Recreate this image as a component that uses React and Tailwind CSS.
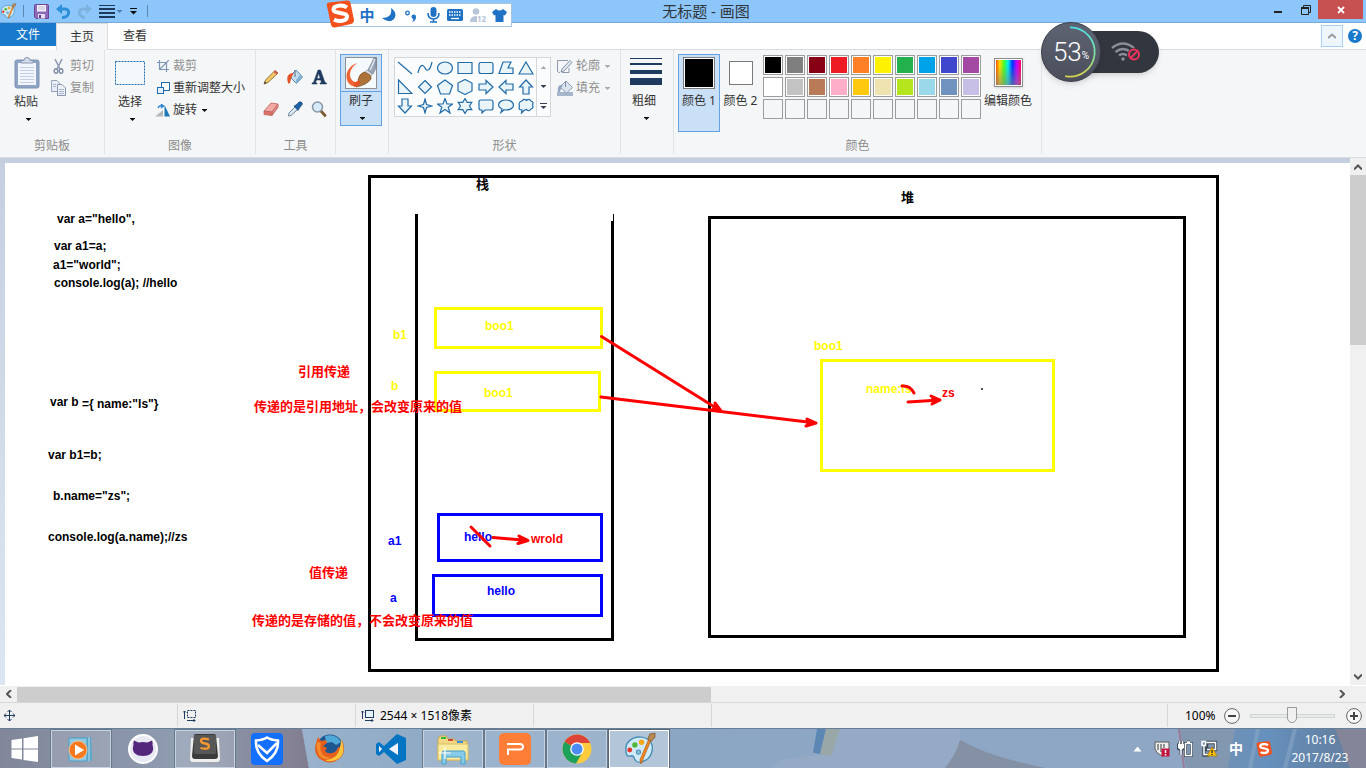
import React from "react";

const INK = "#1e3a5f";

function Icon({ w = 16, h = 16, box, className = "", children }) {
  return (
    <svg width={w} height={h} viewBox={box || `0 0 ${w} ${h}`} className={`shrink-0 ${className}`} aria-hidden="true">
      {children}
    </svg>
  );
}

function Caret({ color = "#111" }) {
  return (
    <Icon w={5} h={3}>
      <path d="M0 0H5V.5L2.500 3L0 .5Z" fill={color} />
    </Icon>
  );
}

function Palette({ size = 16 }) {
  return (
    <Icon w={size} h={size} box="0 0 32 32">
      <path
        d="M3 20C1 10 9 4 18 5c8 1 12 7 10 14-2 8-9 11-14 10-4-1-2-5-5-6-3 0-5 2-6-3Z"
        fill="#cfeaf8"
        stroke="#4a8fb8"
        strokeWidth="1.4"
      />
      <circle cx="6.500" cy="17.500" r="2.400" fill="#e5392f" />
      <circle cx="11.500" cy="12.500" r="2.600" fill="#52b83a" />
      <circle cx="18" cy="10" r="2.700" fill="#f6a91c" />
      <circle cx="15" cy="19.500" r="2" fill="#8fc0de" stroke="#4a8fb8" />
      <path d="M27 8L17.500 31L16.500 27L25 7Z" fill="#f08a24" stroke="#b8651a" strokeWidth=".8" />
      <path d="M24 7L26 2L31 1L31 5L27.500 9Z" fill="#b98a52" stroke="#7d5a33" strokeWidth=".8" />
    </Icon>
  );
}

function SogouMark({ size = 28 }) {
  return (
    <Icon w={size} h={size} box="0 0 28 28">
      <path d="M1 6Q0 3 3 2.500L21 .5Q24 0 24.500 3L28 20Q28 23 25 24L9 27.500Q6 28 5 25Z" fill="#f2501c" />
      <path
        d="M21 7.500C17 4.500 7.500 5 7.500 9.500C7.500 14 21 12 21 16.500C21 21.500 12 22 8 19.500"
        fill="none"
        stroke="#fff"
        strokeWidth="4"
      />
    </Icon>
  );
}

function TitleBar() {
  return (
    <header className="flex h-[23px] items-center border-b border-[#76aadb] bg-[#8cc6fa]">
      <div className="flex w-[150px] shrink-0 items-center">
        <Palette size={16} />
        <span className="ml-[7px] h-3 w-px bg-[#5b87ad]" />
        <button aria-label="保存" className="ml-[10px]">
          <Icon w={15} h={15}>
            <path d="M.5 1.500Q.5.5 1.500.5H13.500Q14.500.5 14.500 1.500V14.500H2L.5 13Z" fill="#8d69b8" stroke="#6b4796" />
            <rect x="3" y="1" width="9" height="6.500" fill="#f3f1f8" />
            <path d="M4 3H11M4 5H11" stroke="#c5bcd8" />
            <rect x="4" y="10" width="7" height="4.500" fill="#e4def0" />
            <rect x="5" y="11" width="2" height="3" fill="#5d3b8a" />
          </Icon>
        </button>
        <button aria-label="撤消" className="ml-[7px]">
          <Icon w={15} h={15}>
            <path d="M4 5H9C12 5 13 7 12.500 9.500C12 12 9 13.500 6 13.500" fill="none" stroke="#2d8fd8" strokeWidth="3" />
            <path d="M6 0V10L0 5Z" fill="#2d8fd8" />
          </Icon>
        </button>
        <button aria-label="重做" className="ml-[6px]">
          <Icon w={15} h={15}>
            <path d="M11 5H6C3 5 2 7 2.500 9.500C3 12 6 13.500 8 13.500" fill="none" stroke="#7db1de" strokeWidth="3" />
            <path d="M9 0V10L15 5Z" fill="#7db1de" />
          </Icon>
        </button>
        <button aria-label="线条粗细" className="ml-[7px] flex items-center gap-[2px]">
          <Icon w={16} h={14}>
            <path d="M0 1.500H16" stroke="#1c3a5c" strokeWidth="1" />
            <path d="M0 5H16M0 9H16M0 13H16" stroke="#1c3a5c" strokeWidth="2" />
          </Icon>
          <Caret color="#4d7fb3" />
        </button>
        <button aria-label="自定义快速访问工具栏" className="ml-2">
          <Icon w={7} h={7}>
            <path d="M0 .5H7" stroke="#111" />
            <path d="M0 3H7L3.500 6.500Z" fill="#111" />
          </Icon>
        </button>
        <span className="ml-[10px] h-3 w-px bg-[#5b87ad]" />
      </div>
      <h1 className="flex-1 text-center text-[15px] leading-[22px] text-[#30353b]">无标题 - 画图</h1>
      <div className="flex h-full w-[104px] shrink-0 items-start text-[#222]">
        <button aria-label="最小化" className="flex h-[19px] w-8 items-center justify-center pt-1">
          <Icon w={8} h={2}>
            <path d="M0 1H8" stroke="#222" strokeWidth="2" />
          </Icon>
        </button>
        <button aria-label="还原" className="flex h-[19px] w-6 items-center justify-center">
          <Icon w={10} h={10}>
            <path d="M2.500 2V.5H9.500V7.500H8" fill="none" stroke="#222" />
            <path d="M.5 3V9.500H7.500V3" fill="none" stroke="#222" />
            <path d="M0 3H8" stroke="#222" strokeWidth="2" />
          </Icon>
        </button>
        <button aria-label="关闭" className="flex h-[19px] w-[45px] items-center justify-center bg-[#c75050]">
          <Icon w={8} h={8}>
            <path d="M1 1L7 7M7 1L1 7" stroke="#fff" strokeWidth="1.8" />
          </Icon>
        </button>
      </div>
    </header>
  );
}

function Tabs() {
  return (
    <nav className="flex h-[27px] items-stretch bg-white text-xs leading-4 text-[#333]">
      <button className="h-[23px] w-14 bg-[#1979ca] text-white">文件</button>
      <button className="w-[52px] border-x border-t border-[#dadbdc] bg-[#f5f6f7]">主页</button>
      <div className="flex flex-1 items-start justify-between border-b border-[#dadbdc]">
        <button className="h-[26px] w-[54px]">查看</button>
        <div className="flex items-center gap-[5px] pr-1 pt-[2px]">
          <button aria-label="折叠功能区" className="flex h-[22px] w-[22px] items-center justify-center border border-[#a9d0f5] bg-[#eef6fd]">
            <Icon w={8} h={6}>
              <path d="M0 5L4 1.500L8 5" fill="none" stroke="#999" strokeWidth="2" />
            </Icon>
          </button>
          <button aria-label="帮助" className="flex h-[14px] w-[14px] items-center justify-center rounded-full bg-[#1979ca] text-xs font-bold leading-[14px] text-white">
            ?
          </button>
        </div>
      </div>
    </nav>
  );
}

function Group({ label, className = "", children }) {
  return (
    <section className={`flex h-full shrink-0 flex-col ${className}`}>
      <div className="flex h-[88px] items-start border-r border-[#e2e3e4] pt-1">{children}</div>
      <div className="mb-[3px] h-4 border-r border-[#e2e3e4] text-center text-xs leading-4 text-[#8c8c8c]">{label}</div>
    </section>
  );
}

function RowButton({ icon, label, muted, caret, tight }) {
  return (
    <button className={`flex h-[22px] items-center whitespace-nowrap ${muted ? "text-[#8f8f8f]" : "text-[#333]"}`}>
      <span className={`flex shrink-0 items-center ${tight ? "w-4" : "w-[19px]"}`}>{icon}</span>
      {label}
      {caret && (
        <span className="ml-[5px]">
          <Caret color={muted ? "#aaa" : "#111"} />
        </span>
      )}
    </button>
  );
}

const arrowR = "M1 5H8V1.500L15 8L8 14.500V11H1Z";
const SHAPES = [
  ["直线", "M1 2L15 14"],
  ["曲线", "M1 13C3 4 6 4 8 8C10 12 13 11 15 2"],
  ["椭圆形", "M.5 8A7.500 6 0 1 1 15.500 8A7.500 6 0 1 1 .5 8Z"],
  ["矩形", "M1 2.500H15V13.500H1Z"],
  ["圆角矩形", "M3 2.500H13Q15 2.500 15 4.500V11.500Q15 13.500 13 13.500H3Q1 13.500 1 11.500V4.500Q1 2.500 3 2.500Z"],
  ["多边形", "M5 2H13L10 8H15V13.500H1Z"],
  ["三角形", "M8 2L15 14H1Z"],
  ["直角三角形", "M1.500 1L15 14.500H1.500Z"],
  ["菱形", "M8 1.500L14.500 8L8 14.500L1.500 8Z"],
  ["五边形", "M8 1L15.500 6.500L12.500 15H3.500L.5 6.500Z"],
  ["六边形", "M8 .5L15 4V12L8 15.500L1 12V4Z"],
  ["右箭头", arrowR],
  ["左箭头", "M15 5H8V1.500L1 8L8 14.500V11H15Z"],
  ["向上箭头", "M5 15V8H1.500L8 1L14.500 8H11V15Z"],
  ["向下箭头", "M5 1V8H1.500L8 15L14.500 8H11V1Z"],
  ["四角星形", "M8 1L9.500 6.500L15 8L9.500 9.500L8 15L6.500 9.500L1 8L6.500 6.500Z"],
  ["五角星形", "M8 .5L10 6H15.500L11.200 9.200L13 15L8 11.500L3 15L4.800 9.200L.5 6H6Z"],
  ["六角星形", "M8 .5L10.200 4.300H14.800L12.500 8L14.800 11.700H10.200L8 15.500L5.800 11.700H1.200L3.500 8L1.200 4.300H5.800Z"],
  ["圆角矩形标注", "M3 2H13Q15 2 15 4V10Q15 12 13 12H7L4 15V12H3Q1 12 1 10V4Q1 2 3 2Z"],
  ["椭圆形标注", "M8 2C12 2 15.500 4 15.500 7C15.500 10 12 12 8 12Q6.500 12 6 11.800L3 14.500L4 11C2 10 .5 8.500 .5 7C.5 4 4 2 8 2Z"],
  ["云形标注", "M4 3Q6 0 8.500 2.500Q11 0 13 3Q16 4 14.500 7Q16 10 13 11Q11 14 8.500 11.500L6 12.500L3.500 15L4 12Q0 12 1.500 8.500Q0 4 4 3Z"],
];

const SWATCHES = [
  ["黑色", "bg-black"], ["灰色-50%", "bg-[#7f7f7f]"], ["深红色", "bg-[#880015]"], ["红色", "bg-[#ed1c24]"], ["橙色", "bg-[#ff7f27]"],
  ["黄色", "bg-[#fff200]"], ["绿色", "bg-[#22b14c]"], ["青绿", "bg-[#00a2e8]"], ["靛青", "bg-[#3f48cc]"], ["紫色", "bg-[#a349a4]"],
  ["白色", "bg-white"], ["灰色-25%", "bg-[#c3c3c3]"], ["褐色", "bg-[#b97a57]"], ["玫瑰色", "bg-[#ffaec9]"], ["金色", "bg-[#ffc90e]"],
  ["浅黄色", "bg-[#efe4b0]"], ["酸橙色", "bg-[#b5e61d]"], ["淡青绿色", "bg-[#99d9ea]"], ["蓝灰色", "bg-[#7092be]"], ["淡紫色", "bg-[#c8bfe7]"],
];

const TOOLS = [
  ["铅笔", <><path d="M1 15L2.500 11L12 1.500L15 4L5 13.500Z" fill="#f2c968" stroke="#8a6a35" strokeWidth=".9" /><path d="M12 1.500L15 4L13.500 5.500L10.500 3Z" fill="#d65a4a" /><path d="M1 15L2 12.500L3.500 14Z" fill="#333" /></>],
  ["用颜色填充", <><path d="M4 6L9 1L15.500 8L9.500 14.500L4 9Z" fill="#c7dcec" stroke="#5986ad" /><path d="M9 11L13 6L15.500 8L9.500 14.500Z" fill="#7fb0d6" /><path d="M8 1V8" stroke="#5d6f80" /><path d="M1 14C-.5 9 0 4 7 4C5 6 4 10 3 14Q2 15 1 14Z" fill="#e4532a" /></>],
  ["文本", <path d="M1 15V14L2.500 13.500L7 1H9.500L14 13.500L15.500 14V15H9V14L10.500 13.500L9.700 11H5.500L4.500 13.500L6 14V15ZM6 9.500H9.200L7.600 4.500Z" fill={INK} stroke={INK} strokeWidth=".5" />],
  ["橡皮擦", <><path d="M1 10L8 2L15 3L9 11L1 10Z" fill="#f3aaa5" stroke="#bb6660" strokeWidth=".8" /><path d="M9 11L15 3V6.500L9 14.500Z" fill="#e58a84" stroke="#bb6660" strokeWidth=".8" /><path d="M1 10V13.500L9 14.500V11Z" fill="#e06f68" stroke="#bb6660" strokeWidth=".8" /></>],
  ["颜色选取器", <><path d="M1.500 15L2 12L8 6L10.500 8.500L4 14.500Z" fill="#dce8f1" stroke="#6f8293" /><path d="M7 5L9 4L12 1Q15 0 15.500 3L12.500 7L11 9.500Z" fill="#1f62a5" stroke="#174672" strokeWidth=".7" /></>],
  ["放大镜", <><path d="M10 10L14 14.500" stroke="#7d5a33" strokeWidth="2.800" strokeLinecap="round" /><circle cx="6.500" cy="6" r="5" fill="#d6eafa" stroke="#8797a6" strokeWidth="1.500" /></>],
];

function Ribbon() {
  return (
    <div className="flex h-[108px] overflow-hidden border-b border-[#dadbdc] bg-[#f5f6f7] text-xs leading-4 text-[#333]">
      <Group label="剪贴板" className="w-[105px]">
        <button className="ml-[10px] flex w-8 flex-col items-center pt-[3px]">
          <Icon w={26} h={32} className="ml-[2px]">
            <rect x="1" y="3" width="24" height="28" rx="2" fill="#8fa3c4" stroke="#7f93b5" />
            <rect x="4" y="6" width="18" height="22" fill="#f2f6fc" />
            <path d="M6 10.500H20M6 13.500H20M6 16.500H20M6 19.500H20M6 22.500H20M6 25.500H20" stroke="#c5d0e4" />
            <path d="M7 6V3.500H10Q10 .5 13 .5T16 3.500H19V6Z" fill="#d3dcea" stroke="#8797b3" />
          </Icon>
          <span className="mt-[5px]">粘贴</span>
          <span className="ml-1 mt-[7px] flex h-1 items-center"><Caret /></span>
        </button>
        <div className="ml-[9px] pt-px">
          <RowButton muted label="剪切" icon={
            <Icon w={15} h={16}>
              <path d="M4 1L9 11M11 1L6 11" stroke="#8f9bb0" strokeWidth="1.600" />
              <ellipse cx="5" cy="13" rx="1.800" ry="2.200" fill="none" stroke="#7f8ca5" strokeWidth="1.400" />
              <ellipse cx="10" cy="13" rx="1.800" ry="2.200" fill="none" stroke="#7f8ca5" strokeWidth="1.400" />
            </Icon>} />
          <RowButton muted label="复制" icon={
            <Icon w={15} h={16}>
              <path d="M.5.5H6L8.500 3V11.500H.5Z" fill="#e9eef6" stroke="#96a5be" />
              <path d="M6.500 4.500H11L14.500 8V15.500H6.500Z" fill="#eef2f8" stroke="#8797b3" />
              <path d="M8 9.500H13M8 11.500H13M8 13.500H13M2 4.500H5M2 6.500H5" stroke="#a9b6cc" />
            </Icon>} />
        </div>
      </Group>

      <Group label="图像" className="w-[151px]">
        <button className="ml-[6px] flex w-[38px] flex-col items-center pt-[7px]">
          <Icon w={30} h={24}>
            <rect x=".5" y=".5" width="29" height="23" fill="#f3f8fd" stroke="#1d6cb0" strokeDasharray="2 1" />
          </Icon>
          <span className="mt-[9px]">选择</span>
          <span className="ml-1 mt-[7px] flex h-1 items-center"><Caret /></span>
        </button>
        <div className="ml-2 pt-px">
          <RowButton muted tight label="裁剪" icon={
            <Icon w={12} h={12}>
              <path d="M2.500 0V9.500H12M0 2.500H9.500V12M3 9L12 0" fill="none" stroke="#7f95b5" strokeWidth="1.200" />
            </Icon>} />
          <RowButton tight label="重新调整大小" icon={
            <Icon w={13} h={12}>
              <rect x="4.500" y=".5" width="8" height="8" fill="#fff" stroke="#1d6cb0" />
              <rect x=".5" y="5.500" width="6" height="6" fill="#e4f0fa" stroke="#1d6cb0" />
            </Icon>} />
          <RowButton caret tight label="旋转" icon={
            <Icon w={16} h={13} className="-ml-[2px]">
              <path d="M0 12.500L8 6V12.500Z" fill="#b3b8bd" />
              <path d="M9.500 1L15 12.500H9.500Z" fill="#1d78b8" />
              <path d="M3 4Q4 1 7.500 2M6 0L8.500 2L6 4" fill="none" stroke="#2581cf" strokeWidth="1.300" />
            </Icon>} />
        </div>
      </Group>

      <Group label="工具" className="w-20">
        <div className="ml-[3px] grid grid-cols-3 pt-[7px]">
          {TOOLS.map(([name, art]) => (
            <button key={name} aria-label={name} className="flex h-8 w-6 items-center justify-center">
              <Icon w={16} h={16}>{art}</Icon>
            </button>
          ))}
        </div>
      </Group>

      <Group className="w-[53px]">
        <button className="ml-1 flex h-[72px] w-[42px] flex-col items-center border border-[#62a2e4] bg-[#c9e0f7] pt-[2px]">
          <Icon w={32} h={32}>
            <rect x=".5" y=".5" width="31" height="31" fill="#f5fafc" stroke="#8d9092" />
            <path d="M13 6C4 8 0 16 2 23C4 29 10 31 15 28L13 25C8 26 5 22 5 17C6 11 9 8 13 6Z" fill="#ee6435" />
            <path d="M23 13L28 17L31 11V1H29Z" fill="#9aa7b8" stroke="#5f6d7f" strokeWidth=".6" />
            <path d="M25 13L30 2" stroke="#dfe6ee" strokeWidth="1.500" />
            <path d="M22 13L27 17L25 21L19 16Z" fill="#dfe5ec" stroke="#6d7987" strokeWidth=".6" />
            <path d="M19 15Q27 17 26 22Q22 28 11 30Q16 27 13 23Q14 17 19 15Z" fill="#ad713a" stroke="#714420" strokeWidth=".6" />
            <path d="M9 30Q17 29 14 23L9 26Z" fill="#e65225" />
          </Icon>
          <span className="mt-[2px] w-full border-t border-[#62a2e4] pt-px">刷子</span>
          <span className="ml-[3px] mt-[7px] flex h-1 items-center"><Caret /></span>
        </button>
      </Group>

      <Group label="形状" className="w-[232px]">
        <div className="ml-[5px] mt-[3px] flex h-[60px] w-[157px] border border-[#d5d7da] bg-[#fbfcfd]">
          <div className="grid flex-1 grid-cols-7">
            {SHAPES.map(([name, d], i) => (
              <button key={name} aria-label={name} className="flex items-center justify-center">
                <Icon w={16} h={16}>
                  <path d={d} fill={i < 2 ? "none" : "#eaf5fa"} stroke="#226ca8" strokeWidth="1.200" />
                </Icon>
              </button>
            ))}
          </div>
          <div className="flex w-[14px] flex-col border-l border-[#d5d7da]">
            <button aria-label="上一行" className="flex flex-1 items-center justify-center"><Icon w={5} h={3}><path d="M2.500 0L5 2.500V3H0V2.500Z" fill="#a5aab3" /></Icon></button>
            <button aria-label="下一行" className="flex flex-1 items-center justify-center"><Caret color="#333f52" /></button>
            <button aria-label="其他" className="flex flex-1 items-center justify-center">
              <Icon w={7} h={7}><path d="M0 .5H7" stroke="#333f52" /><path d="M.5 3H6.500L3.500 6Z" fill="#333f52" /></Icon>
            </button>
          </div>
        </div>
        <div className="ml-[6px] pt-px">
          <RowButton muted caret label="轮廓" icon={
            <Icon w={16} h={15}>
              <path d="M11 1.500H.5V12.500L3 14M12 9V13.500H5" fill="none" stroke="#8c99ac" />
              <path d="M4 13L5 10L13 1.500L15 3.500L7 12Z" fill="#dfe6ef" stroke="#8593a8" />
            </Icon>} />
          <RowButton muted caret label="填充" icon={
            <Icon w={16} h={16}>
              <rect x="0" y="12" width="16" height="4" fill="#a5b5cc" />
              <path d="M4 6L9 1L15.500 7.500L9.500 13L4 8Z" fill="#dce5ef" stroke="#8c9cb5" />
              <path d="M1 12C0 8 2 4 6 5C4 7 4 9 3 12Z" fill="#93a5c0" />
              <path d="M8.500 1V7" stroke="#7f8da5" />
            </Icon>} />
        </div>
      </Group>

      <Group className="w-[53px]">
        <button className="ml-[6px] flex w-[38px] flex-col items-center pt-1">
          <Icon w={32} h={28}>
            <path d="M0 .5H32" stroke={INK} strokeWidth="1" />
            <path d="M0 6H32" stroke={INK} strokeWidth="2" />
            <path d="M0 14H32" stroke={INK} strokeWidth="4" />
            <path d="M0 23.500H32" stroke={INK} strokeWidth="7" />
          </Icon>
          <span className="mt-[7px] pr-1">粗细</span>
          <span className="ml-px mt-[7px] flex h-1 items-center"><Caret /></span>
        </button>
      </Group>

      <Group label="颜色" className="w-[368px]">
        <button className="ml-1 flex h-[78px] w-[42px] flex-col items-center border border-[#62a2e4] bg-[#c9e0f7] pt-[2px]">
          <span className="h-8 w-8 border border-[#7a7a7a] bg-black outline-1 -outline-offset-2 outline-white" />
          <span className="mt-1 whitespace-nowrap">颜色 1</span>
        </button>
        <button className="flex w-[41px] flex-col items-center pt-[7px]">
          <span className="h-6 w-6 border border-[#7a7a7a] bg-white" />
          <span className="mt-2 whitespace-nowrap">颜色 2</span>
        </button>
        <div className="ml-[2px] mt-px grid grid-cols-10 gap-[2px]">
          {SWATCHES.map(([name, fill]) => (
            <button key={name} aria-label={name} className="h-5 w-5 border border-[#9d9d9d] bg-white p-px">
              <span className={`block h-full w-full ${fill}`} />
            </button>
          ))}
          {Array.from({ length: 10 }, (_, i) => (
            <button key={i} aria-label={`自定义颜色 ${i + 1}`} className="h-5 w-5 border border-[#9d9d9d]" />
          ))}
        </div>
        <button className="ml-[2px] flex w-[50px] flex-col items-center pt-1">
          <span className="h-[29px] w-[29px] border border-[#8d8d8d] bg-white p-px shadow-sm">
            <span className="block h-full w-full bg-[linear-gradient(to_bottom,transparent_20%,#80808099),linear-gradient(to_right,#f50,#fd0_15%,#4f2_32%,#0ee_48%,#03f_66%,#c0f_84%,#f05)]" />
          </span>
          <span className="mt-[6px] whitespace-nowrap">编辑颜色</span>
        </button>
      </Group>
    </div>
  );
}

const LABELS = [
  [57, 223, 'var a="hello",', "#000"],
  [54, 250, "var a1=a;", "#000"],
  [53, 269, 'a1="world";', "#000"],
  [54, 287, "console.log(a); //hello", "#000"],
  [50, 406, "var b", "#000"],
  [82, 408, '={ name:"ls"}', "#000"],
  [48, 459, "var b1=b;", "#000"],
  [53, 500, 'b.name="zs";', "#000"],
  [48, 541, "console.log(a.name);//zs", "#000"],
  [393, 339, "b1", "#ff0"],
  [391, 390, "b", "#ff0"],
  [485, 330, "boo1", "#ff0"],
  [484, 397, "boo1", "#ff0"],
  [814, 350, "boo1", "#ff0"],
  [866, 393, "name:ls", "#ff0"],
  [388, 545, "a1", "#00f"],
  [390, 602, "a", "#00f"],
  [464, 541, "hello", "#00f"],
  [487, 595, "hello", "#00f"],
  [531, 543, "wrold", "#f00"],
  [942, 397, "zs", "#f00"],
];

const NOTES = [
  [476, 189, "栈", "#000"],
  [901, 202, "堆", "#000"],
  [298, 376, "引用传递", "#f00"],
  [254, 411, "传递的是引用地址，会改变原来的值", "#f00"],
  [309, 577, "值传递", "#f00"],
  [252, 625, "传递的是存储的值，不会改变原来的值", "#f00"],
];

function Drawing() {
  return (
    <svg width="1345" height="522" viewBox="5 163 1345 522" className="block" role="img" aria-label="栈与堆示意图">
      <g fill="none" stroke="#000" strokeWidth="3">
        <path d="M369.500 176.500H1217.500V670.500H369.500Z" />
        <path d="M416.500 214V639.500H612.500V221" />
        <path d="M613.500 214V222" strokeWidth="1" />
        <path d="M709.500 217.500H1184.500V636.500H709.500Z" />
      </g>
      <g fill="none" stroke="#ff0" strokeWidth="3">
        <path d="M435.500 308.500H601.500V347.500H435.500Z" />
        <path d="M435.500 372.500H599.500V410.500H435.500Z" />
        <path d="M821.500 360.500H1053.500V470.500H821.500Z" />
      </g>
      <g fill="none" stroke="#00f" strokeWidth="3">
        <path d="M438.500 514.500H601.500V560.500H438.500Z" />
        <path d="M433.500 575.500H601.500V615.500H433.500Z" />
      </g>
      <rect x="981" y="388" width="2" height="2" fill="#555" />
      <g className="font-['Liberation_Sans',Arial,sans-serif] text-xs font-bold">
        {LABELS.map(([x, y, text, fill]) => (
          <text key={`${x}-${y}`} x={x} y={y} fill={fill}>{text}</text>
        ))}
      </g>
      <g className="font-['Noto_Sans_CJK_SC',sans-serif] text-[13px] font-bold">
        {NOTES.map(([x, y, text, fill]) => (
          <text key={`${x}-${y}`} x={x} y={y} fill={fill}>{text}</text>
        ))}
      </g>
      <g fill="none" stroke="#f00" strokeWidth="3" strokeLinecap="round" strokeLinejoin="round">
        <path d="M601.500 336.500L721 411M715 403L721 411L711 410" />
        <path d="M601 397L816 423M807 419L816 423L806 426" />
        <path d="M471 527L490 546" />
        <path d="M493 537.500L528 540.500M519 536L528 540.500L518 543.500" />
        <path d="M902 386Q910 385 914 393" />
        <path d="M908 402L940 400M931 396L940 400L932 404" />
      </g>
      <path d="M715 403L721 411L711 410ZM807 419L816 423L806 426ZM519 536L528 540.500L518 543.500ZM931 396L940 400L932 404Z" fill="#f00" />
    </svg>
  );
}

function Workspace() {
  return (
    <main className="flex min-h-[527px] flex-1">
      <div className="min-w-0 flex-1 overflow-hidden bg-linear-to-b from-[#c5cfe0] to-[#dce6f2] pl-[5px] pt-[5px]">
        <div className="h-full overflow-hidden bg-white">
          <Drawing />
        </div>
      </div>
      <div className="flex w-4 shrink-0 flex-col items-center bg-[#f0f0f0]">
        <button aria-label="向上滚动" className="flex h-[17px] w-4 items-center justify-center">
          <Icon w={8} h={6}><path d="M0 5.500L4 1.500L8 5.500" fill="none" stroke="#555" strokeWidth="2" /></Icon>
        </button>
        <div className="h-[170px] w-full bg-[#cdcdcd]" />
        <div className="flex-1" />
        <button aria-label="向下滚动" className="flex h-[17px] w-4 items-center justify-center">
          <Icon w={8} h={6}><path d="M0 .5L4 4.500L8 .5" fill="none" stroke="#555" strokeWidth="2" /></Icon>
        </button>
      </div>
    </main>
  );
}

function HorizontalScroll() {
  return (
    <div className="flex h-[17px] items-center border-t border-white bg-[#f0f0f0] pr-4">
      <button aria-label="向左滚动" className="flex h-4 w-[17px] items-center justify-center">
        <Icon w={6} h={8}><path d="M5 0L1 4L5 8" fill="none" stroke="#555" strokeWidth="2" /></Icon>
      </button>
      <div className="flex h-[15px] flex-1">
        <div className="flex-[694] bg-[#cdcdcd]" />
        <div className="flex-[622]" />
      </div>
      <button aria-label="向右滚动" className="flex h-4 w-[17px] items-center justify-center">
        <Icon w={6} h={8}><path d="M1 0L5 4L1 8" fill="none" stroke="#555" strokeWidth="2" /></Icon>
      </button>
    </div>
  );
}

function StatusBar() {
  const cell = "flex w-[178px] items-center border-r border-[#d7d7d7]";
  return (
    <footer className="flex h-[26px] border-t border-[#d7d7d7] bg-[#f0f0f0] py-px text-xs leading-4 text-black">
      <div className={`${cell} pl-1`}>
        <Icon w={11} h={11}>
          <path d="M5.500 0V11M0 5.500H11M3.500 2L5.500 0L7.500 2M3.500 9L5.500 11L7.500 9M2 3.500L0 5.500L2 7.500M9 3.500L11 5.500L9 7.500" fill="none" stroke={INK} />
        </Icon>
      </div>
      <div className={`${cell} pl-[5px]`}>
        <Icon w={13} h={12}>
          <path d="M1.500 1V9M0 2.500L1.500 1L3 2.500M4 10.500H12M10.500 9L12 10.500L10.500 12" fill="none" stroke={INK} />
          <rect x="4.500" y=".5" width="8" height="7" fill="none" stroke={INK} strokeDasharray="2 1" />
        </Icon>
      </div>
      <div className={`${cell} gap-[6px] pl-[5px]`}>
        <Icon w={13} h={12}>
          <path d="M1.500 1V9M0 2.500L1.500 1L3 2.500M4 10.500H12M10.500 9L12 10.500L10.500 12" fill="none" stroke={INK} />
          <rect x="4.500" y=".5" width="8" height="7" fill="#e6f3fb" stroke={INK} />
        </Icon>
        <span className="whitespace-nowrap">2544 × 1518像素</span>
      </div>
      <div className={cell} />
      <div className="flex-1" />
      <div className="flex w-[199px] items-center border-l border-[#d7d7d7] pl-[17px]">
        <span>100%</span>
        <button aria-label="缩小" className="ml-2">
          <Icon w={16} h={16}><circle cx="8" cy="8" r="7.400" fill="#f8f8f8" stroke="#666" /><path d="M4 8H12" stroke="#444" strokeWidth="2" /></Icon>
        </button>
        <input
          type="range"
          aria-label="缩放"
          defaultValue="50"
          className="ml-[10px] h-[18px] w-[85px] appearance-none bg-transparent [&::-webkit-slider-runnable-track]:h-[4px] [&::-webkit-slider-runnable-track]:border [&::-webkit-slider-runnable-track]:border-[#d0d4d4] [&::-webkit-slider-runnable-track]:bg-[#e7eaea] [&::-webkit-slider-thumb]:-mt-[8px] [&::-webkit-slider-thumb]:h-4 [&::-webkit-slider-thumb]:w-[10px] [&::-webkit-slider-thumb]:appearance-none [&::-webkit-slider-thumb]:rounded-b-md [&::-webkit-slider-thumb]:border [&::-webkit-slider-thumb]:border-[#9a9a9a] [&::-webkit-slider-thumb]:bg-[#f0f0f0]"
        />
        <button aria-label="放大" className="ml-[11px]">
          <Icon w={16} h={16}><circle cx="8" cy="8" r="7.400" fill="#f8f8f8" stroke="#666" /><path d="M4 8H12M8 4V12" stroke="#444" strokeWidth="2" /></Icon>
        </button>
      </div>
    </footer>
  );
}

const APPS = [
  ["媒体播放器", "open", (
    <Icon w={32} h={32}>
      <path d="M8 5L26 4L27 28L8 28Z" fill="#58a8cd" /><path d="M4 5H22V28H4Z" fill="#8ec9e2" stroke="#4f9dc2" /><path d="M24 4V28" stroke="#b9e0ef" />
      <circle cx="13" cy="17" r="9" fill="#f4791f" stroke="#fbc08c" /><path d="M10 11.500L19 17L10 22.500Z" fill="#fff" />
    </Icon>
  )],
  ["GitHub", "idle", (
    <Icon w={32} h={32}>
      <circle cx="16" cy="16" r="14" fill="#e9e9f3" stroke="#fff" strokeWidth="2" />
      <path d="M7 7.500L11.500 9.500Q16 8.500 20.500 9.500L25 7.500Q26 10 25.500 12Q27 16 25 19.500Q22 23 16 23T7 19.500Q5 16 6.500 12Q6 10 7 7.500Z" fill="#54277c" />
    </Icon>
  )],
  ["Sublime Text", "open", (
    <Icon w={32} h={32}>
      <path d="M2 5H30L31 26Q31 29 28 29H4Q1 29 1 26Z" fill="#eeeeec" />
      <path d="M5 2Q5 1 7 1H25Q27 1 27 3L29 23Q29 26 26 26H6Q3 26 3 23Z" fill="#3b3b3b" /><path d="M5 2H27V19Q27 21 25 21H7Q5 21 5 19Z" fill="#575757" />
      <path d="M20 6.500Q12 4 12 8Q12 10 16 10.500Q20 11 20 13.500Q19.500 17 11.500 15" fill="none" stroke="#f79632" strokeWidth="2.300" />
    </Icon>
  )],
  ["电脑管家", "idle", (
    <Icon w={32} h={32}>
      <rect width="32" height="32" rx="4" fill="#146ffb" />
      <path d="M16 4.500Q20 7 27 7.500Q28 20 16 28Q4 20 5 7.500Q12 7 16 4.500Z" fill="none" stroke="#fff" strokeWidth="2.500" />
      <path d="M7 12L16 20L26 10" fill="none" stroke="#fff" strokeWidth="2.500" />
    </Icon>
  )],
  ["Firefox", "idle", (
    <Icon w={32} h={32}>
      <circle cx="17" cy="15" r="13.500" fill="#20568f" /><path d="M12 3Q23 0 28 9L23 12L19 9L13 10Z" fill="#4fa9d8" />
      <path d="M29 7Q34 20 26 26Q17 33 7 26Q0 20 3 10L5 4L8 8L13 7L14 10L10 13L14 15L12 18Q14 21 19 20Q24 19 25 14Q28 16 29 7Z" fill="#e4601c" />
      <path d="M28 6Q34 20 25 26Q17 30 12 27Q22 26 25 20Q28 14 28 6Z" fill="#fbc63c" /><path d="M4 9L8 10Q6 17 10 22Q14 25 19 24Q11 29 6 22Q3 17 4 9Z" fill="#f58b2a" />
    </Icon>
  )],
  ["Visual Studio Code", "idle", (
    <Icon w={32} h={32}>
      <path d="M22 1L31 5V27L22 31L9 19L4 23L1 21V11L4 9L9 13ZM23 10L14 16L23 22ZM4 13V19L7 16Z" fill="#0174c3" fillRule="evenodd" /><path d="M23 10L14 16L23 22ZM4 13V19L7 16Z" fill="#eef4fa" />
    </Icon>
  )],
  ["文件资源管理器", "open", (
    <Icon w={34} h={32}>
      <path d="M2 6L4 3H10L12 6H18L20 8H31L32 27H2Z" fill="#f0d982" stroke="#c9a94a" />
      <path d="M5 4H10V6H5Z" fill="#36b54a" /><path d="M12 6H17V8H12Z" fill="#d24a3c" /><path d="M21 8H27V10H21Z" fill="#3c8fd8" /><path d="M2 11H32V27H2Z" fill="#f8ea9f" stroke="#d9bf66" />
      <path d="M6 31V20Q6 18 8 18H27Q29 18 29 20V31H25V24H10V31Z" fill="#86cbe9" stroke="#4aa0cb" /><path d="M9 14V26M3 20H15" stroke="#fff" strokeWidth="1.200" />
    </Icon>
  )],
  ["WPS 演示", "open", (
    <Icon w={32} h={32}>
      <rect width="32" height="32" rx="5" fill="#ff7e37" /><path d="M9 22V16.500H21Q24 16.500 24 13.800T21 11H8" fill="none" stroke="#fff" strokeWidth="2" />
    </Icon>
  )],
  ["Chrome", "open", (
    <Icon w={32} h={32}>
      <circle cx="16" cy="16" r="14.500" fill="#fccb3e" />
      <path d="M16 16L3.500 8.700A14.500 14.500 0 0 1 28.500 8.700L29 10H16Z" fill="#dc4437" /><path d="M16 16L3.500 8.700A14.500 14.500 0 0 0 15 30.500L21 20Z" fill="#1da05a" />
      <circle cx="16" cy="16" r="6.800" fill="#fff" /><circle cx="16" cy="16" r="5.500" fill="#4b8bf4" />
    </Icon>
  )],
  ["画图", "active", <Palette size={33} />],
];

const APP_STATE = {
  idle: "border-transparent",
  open: "border-[#c6d2df] bg-white/15 outline-1 outline-[#67798c]",
  active: "border-white bg-white/35 outline-1 outline-[#5b6878]",
};

function Taskbar() {
  return (
    <div className="relative flex h-10 items-center overflow-hidden border-t border-[#667e96] bg-[#8ea9c6]">
      <svg viewBox="0 0 1366 40" preserveAspectRatio="none" className="absolute inset-0 h-full w-full" aria-hidden="true">
        <defs>
          <linearGradient id="wall"><stop offset="0" stopColor="#81869a" /><stop offset=".6" stopColor="#8f9db1" /><stop offset="1" stopColor="#827d90" /></linearGradient>
          <linearGradient id="sky"><stop offset="0" stopColor="#9ab2cb" /><stop offset=".2" stopColor="#8aa6c3" /><stop offset="1" stopColor="#8fa7c5" /></linearGradient>
          <linearGradient id="jeans"><stop offset="0" stopColor="#6f91b6" /><stop offset=".3" stopColor="#6690bd" /><stop offset="1" stopColor="#637f9f" /></linearGradient>
        </defs>
        <path d="M0 0H302L309 40H0Z" fill="url(#wall)" />
        <path d="M302 0H1240V40H309Z" fill="url(#sky)" />
        <path d="M830 0L822 25L780 32L770 40H945Q956 26 960 12V0Z" fill="#94aac5" />
        <path d="M817 0H826L820 26L813 24Z" fill="#5c87b5" />
        <path d="M826 0H840L831 28L820 26Z" fill="#9aa7a9" />
        <path d="M960 11Q990 29 1046 40H945Q956 26 960 11Z" fill="#8491a4" />
        <path d="M1178 0H1240V40H1186Z" fill="#8298b1" />
        <path d="M1179 0L1184 40" stroke="#9a7d96" strokeWidth="2" />
        <path d="M1235 0H1345L1350 40H1228Z" fill="url(#jeans)" />
        <path d="M1258 0L1250 40M1295 0L1285 40" stroke="#8fabc8" strokeWidth="4" opacity=".5" />
        <path d="M1335 0H1366V40H1350Z" fill="#858599" />
      </svg>
      <div className="relative flex h-full flex-1 items-center gap-[2px]">
        <button aria-label="开始" className="flex h-full w-[49px] items-center justify-center">
          <Icon w={28} h={26}>
            <path d="M.5 4L11 2.500V12.500H.5ZM12.500 2.300L27 0V12.500H12.500ZM.5 13.500H11V23.500L.5 22ZM12.500 13.500H27V26L12.500 24Z" fill="#fff" />
          </Icon>
        </button>
        {APPS.map(([name, state, art]) => (
          <button key={name} aria-label={name} className={`flex h-[38px] w-[60px] items-center justify-center border ${APP_STATE[state]}`}>
            {art}
          </button>
        ))}
      </div>
      <div className="relative flex h-full items-center text-white">
        <button aria-label="显示隐藏的图标"><Icon w={9} h={6}><path d="M4.500 .5L8.500 5.500H.5Z" fill="#fff" /></Icon></button>
        <button aria-label="安全防护" className="ml-3">
          <Icon w={18} h={16}><path d="M1 1H15V8Q14 12 8 15Q2 12 1 8Z" fill="#eee" stroke="#5a5a5a" /><path d="M4 3V9M7 3V11M10 3V7" stroke="#777" strokeWidth="1.500" /><rect x="7.500" y="7.500" width="8" height="8" fill="#c3153c" /><path d="M11.500 9V12M11.500 13V14.500" stroke="#fff" strokeWidth="1.500" /></Icon>
        </button>
        <button aria-label="电源" className="ml-[5px]">
          <Icon w={17} h={17}><path d="M8.500 3.500H14.500V15.500H8.500ZM10 2H13M2.500 1V4M5.500 1V4M1 5H7V8Q7 9 4 9Q1 9 1 8ZM4 9V15" fill="none" stroke="#3f4c5b" strokeWidth="3" /><path d="M8.500 3.500H14.500V15.500H8.500ZM10 2H13M2.500 1V4M5.500 1V4M4 9V15" fill="none" stroke="#fff" strokeWidth="1.500" /><path d="M1 4H7V8L4 10L1 8Z" fill="#fff" /></Icon>
        </button>
        <button aria-label="网络" className="ml-[7px]">
          <Icon w={17} h={17}><path d="M5.500 2.500H14.500V9.500H5.500ZM3 6V15H8" fill="none" stroke="#3f4c5b" strokeWidth="3.400" /><path d="M5.500 2.500H14.500V9.500H6M3 6V14.500H8M1 1.500H4.500V5.500H1Z" fill="none" stroke="#fff" strokeWidth="1.500" /><path d="M11 7L16 16H6Z" fill="#ffc20e" stroke="#a87a00" strokeWidth=".7" /><path d="M11 10V13M11 14V15" stroke="#222" strokeWidth="1.300" /></Icon>
        </button>
        <button className="ml-2 w-5 text-sm font-bold leading-5">中</button>
        <button aria-label="搜狗输入法" className="ml-[10px]"><SogouMark size={16} /></button>
        <div className="ml-3 w-[72px] text-center text-xs leading-[18px]">
          <time className="block">10:16</time>
          <time className="block">2017/8/23</time>
        </div>
        <span className="w-[10px]" />
      </div>
    </div>
  );
}

function InputMethodBar() {
  return (
    <div className="absolute left-[326px] top-0 flex h-7 items-center">
      <div className="relative z-10"><SogouMark size={28} /></div>
      <div className="-ml-4 mt-[2px] flex h-6 items-center border border-[#a9c4df] bg-white pl-[17px] pr-[3px] text-[#1f72c4]">
        <button className="w-[22px] text-[15px] font-bold leading-5">中</button>
        <button aria-label="半角" className="flex w-[22px] justify-center"><Icon w={14} h={14}><path d="M9 0Q16 5 12 11Q7 16 0 10Q11 10 9 0Z" fill="#1f72c4" /></Icon></button>
        <button aria-label="标点" className="flex w-[22px] justify-center"><Icon w={12} h={13}><circle cx="2.500" cy="4" r="1.800" fill="none" stroke="#1f72c4" strokeWidth="1.300" /><path d="M6.500 7.500A2.200 2.200 0 1 1 11 8Q11 12 7 13Q8.500 11 8.500 10Q6.500 9.500 6.500 7.500Z" fill="#1f72c4" /></Icon></button>
        <button aria-label="语音" className="flex w-[22px] justify-center"><Icon w={13} h={16}><rect x="3.500" y="0" width="6" height="10" rx="3" fill="#1f72c4" /><path d="M1 6Q1 12 6.500 12T12 6M6.500 12V15M3 15H10" fill="none" stroke="#1f72c4" strokeWidth="1.600" /></Icon></button>
        <button aria-label="软键盘" className="flex w-[22px] justify-center"><Icon w={16} h={12}><rect width="16" height="12" rx="1.500" fill="#1f72c4" /><path d="M2 3H14M2 6H14" stroke="#fff" strokeWidth="1.500" strokeDasharray="1.500 1" /><path d="M4 9.500H12" stroke="#fff" strokeWidth="1.300" /></Icon></button>
        <button aria-label="登录" className="flex w-6 items-end justify-center text-[#b9c6da]">
          <Icon w={11} h={15}><circle cx="6" cy="3.500" r="3.300" fill="#b9c6da" /><path d="M0 14Q0 8 6 8Q11 8 11 11V14Z" fill="#b9c6da" /></Icon>
          <span className="-ml-1 bg-white text-[8px] font-bold leading-[8px]">12</span>
        </button>
        <button aria-label="皮肤" className="flex w-[18px] justify-center"><Icon w={15} h={13}><path d="M4 0Q7.500 3 11 0L15 3L13 6.500L11.500 6V13H3.500V6L2 6.500L0 3Z" fill="#1f72c4" /></Icon></button>
      </div>
    </div>
  );
}

function BoostWidget() {
  return (
    <aside className="absolute right-[207px] top-[22px] flex h-[60px] w-[118px] items-center">
      <div className="absolute inset-y-[9px] left-6 right-0 rounded-r-full bg-[#32363f] shadow-md" />
      <div className="relative flex h-[60px] w-[60px] items-center justify-center rounded-full border border-[#3a3e49] bg-linear-to-b from-[#5f6473] to-[#4a4e5b] shadow-md">
        <svg viewBox="0 0 60 60" className="absolute inset-0 h-full w-full" aria-hidden="true">
          <defs><linearGradient id="ring" x1="0" y1="0" x2="0" y2="1"><stop offset="0" stopColor="#4ce0e6" /><stop offset=".6" stopColor="#84dc96" /><stop offset="1" stopColor="#d8cf4e" /></linearGradient></defs>
          <path d="M29 4.500A25.500 25.500 0 1 1 24 55" fill="none" stroke="url(#ring)" strokeWidth="1.800" />
        </svg>
        <span className="relative font-['Roboto',sans-serif] text-[26px] font-light leading-7 text-white">53</span>
        <span className="relative mt-2 font-['Roboto',sans-serif] text-[10px] leading-3 text-white">%</span>
      </div>
      <Icon w={30} h={20} className="relative ml-[10px]">
        <path d="M1 6Q12 -3 23 6M4.500 10Q12 4 19.500 10M8 13.500Q12 10.500 16 13.500" fill="none" stroke="#8b8d98" strokeWidth="2.400" />
        <circle cx="12" cy="17" r="1.800" fill="#8b8d98" />
        <circle cx="23" cy="12.500" r="6.500" fill="#32363f" /><circle cx="23" cy="12.500" r="5" fill="none" stroke="#f0335a" strokeWidth="2" /><path d="M19.500 16L26.500 9" stroke="#f0335a" strokeWidth="2" />
      </Icon>
    </aside>
  );
}

export default function App() {
  return (
    <div className="relative flex min-h-screen flex-col overflow-hidden bg-[#f0f0f0] font-['Noto_Sans','Noto_Sans_CJK_SC',sans-serif]">
      <TitleBar />
      <Tabs />
      <Ribbon />
      <Workspace />
      <HorizontalScroll />
      <StatusBar />
      <Taskbar />
      <InputMethodBar />
      <BoostWidget />
    </div>
  );
}
